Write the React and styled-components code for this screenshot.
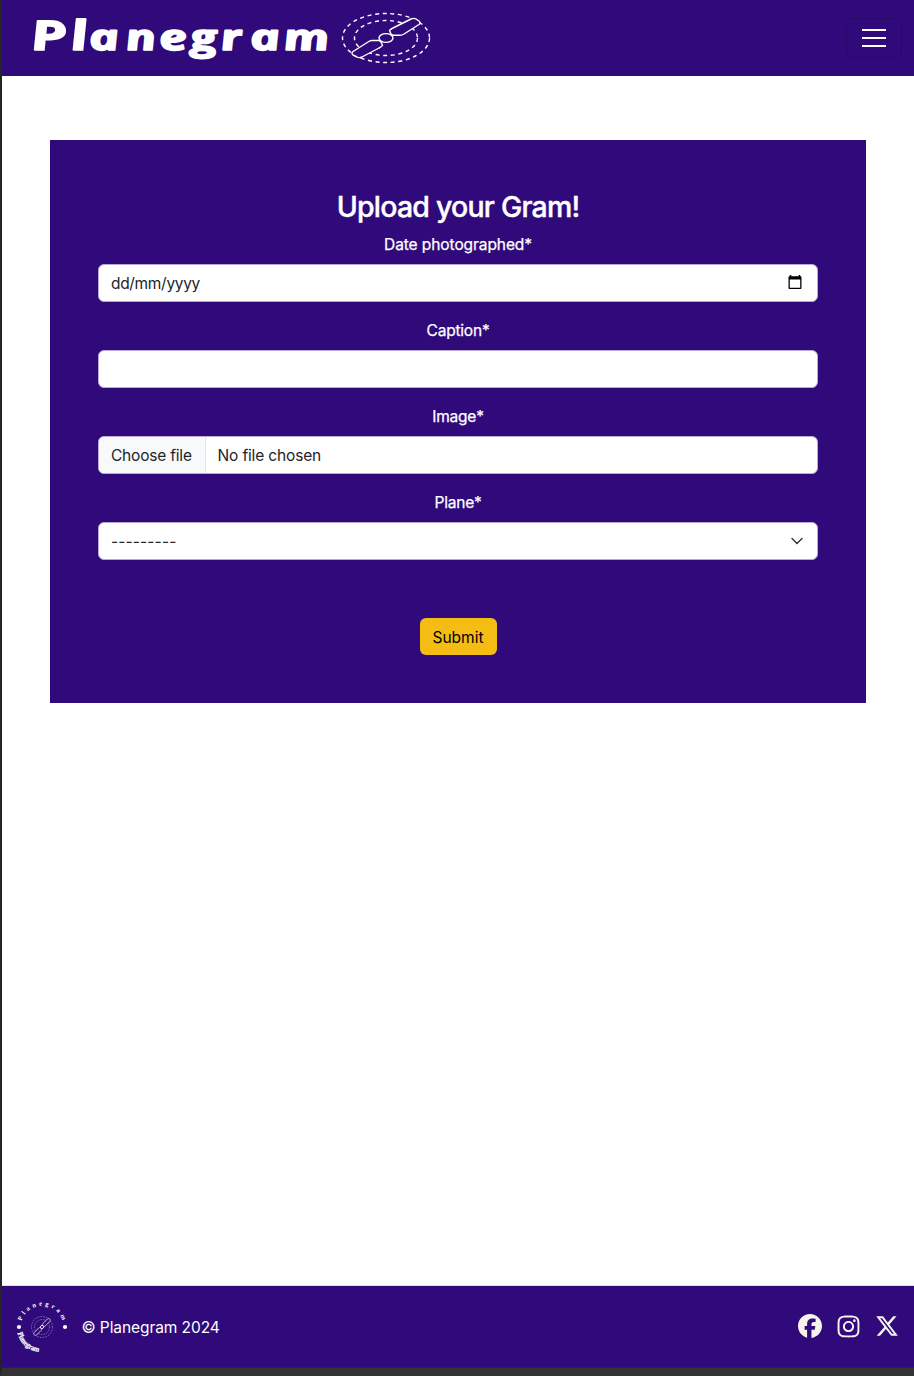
import React from 'react';
import styled, { createGlobalStyle } from 'styled-components';
import { FaFacebook, FaInstagram, FaXTwitter } from 'react-icons/fa6';

const purple = '#300a7b';

const GlobalStyle = createGlobalStyle`
  *, *::before, *::after { box-sizing: border-box; }
  body {
    margin: 0;
    background: #fff;
    color: #212529;
    font: 400 16px/24px Inter, "Liberation Sans", sans-serif;
  }
`;

const Page = styled.div`
  display: flex;
  flex-direction: column;
  height: 1376px;
  border-left: 2px solid #242426;
  border-bottom: 8px solid #333;
`;

const Header = styled.header`
  display: flex;
  align-items: center;
  justify-content: space-between;
  height: 76px;
  padding: 0 12px 0 24px;
  background: ${purple};
`;

const Brand = styled.a`
  display: block;
  height: 76px;
`;

const Wordmark = styled.text`
  fill: #fff;
  stroke: #fff;
  stroke-width: 1.6px;
  stroke-linejoin: round;
  font: italic 700 36px "Open Sans", sans-serif;
`;

const Tall = styled.tspan`
  font-size: 41px;
`;

const Toggler = styled.button`
  display: flex;
  align-items: center;
  justify-content: center;
  width: 56px;
  height: 40px;
  padding: 0;
  background: transparent;
  border: 1px solid #2a086b;
  border-radius: 6px;
`;

const Main = styled.main`
  flex: 1;
  padding: 64px 48px 0;
`;

const Card = styled.form`
  display: flex;
  flex-direction: column;
  height: 563.4px;
  padding: 48px;
  background: ${purple};
`;

const Title = styled.h2`
  margin: 0 0 7px;
  padding-top: 1px;
  color: #fff;
  font-size: 28.5px;
  font-weight: 500;
  line-height: 36px;
  letter-spacing: -0.78px;
  text-align: center;
  -webkit-text-stroke: 0.4px #fff;
`;

const Field = styled.div`
  margin-bottom: 16px;
`;

const Label = styled.label`
  display: block;
  margin-bottom: 7px;
  padding-top: 1px;
  color: #fff;
  text-align: center;
  font-size: 15.5px;
  letter-spacing: ${(p) => p.$spacing || '-0.2px'};
  -webkit-text-stroke: 0.25px #fff;
`;

const Control = styled.div`
  display: flex;
  align-items: center;
  justify-content: space-between;
  height: 38px;
  padding: ${(p) => (p.$file ? '0' : '0 12px')};
  overflow: hidden;
  background: #fff;
  border: 1px solid #b8a8d2;
  border-radius: 6px;
`;

const Value = styled.span`
  padding-top: 2px;
  font-size: 15.5px;
  letter-spacing: ${(p) => p.$spacing || '-0.2px'};
`;

const FileButton = styled.span`
  display: flex;
  align-items: center;
  width: 107px;
  height: 36px;
  padding: 2px 0 0 12px;
  background: #f8f9fa;
  border-right: 1px solid #dee2e6;
  font-size: 15.5px;
  letter-spacing: -0.2px;
`;

const FileName = styled(Value)`
  flex: 1;
  padding-left: 11.5px;
`;

const Submit = styled.button`
  align-self: center;
  width: 77px;
  height: 38px;
  margin-top: 42px;
  padding: 2px 0 0;
  color: #000;
  background: #f5bd13;
  border: 0;
  border-radius: 6px;
  font: 15.5px/24px Inter, sans-serif;
`;

const Footer = styled.footer`
  display: flex;
  align-items: center;
  height: 83px;
  padding: 0 15px 0 13px;
  background: ${purple};
  border-top: 1px solid #e1dcec;
  border-bottom: 1px solid #26243a;
`;

const Copyright = styled.span`
  flex: 1;
  margin-left: 12.5px;
  padding-top: 2px;
  color: #fff;
  font-size: 15.5px;
  letter-spacing: -0.08px;
`;

const Socials = styled.nav`
  display: flex;
  align-items: center;
  gap: 14px;
  padding-bottom: 1px;
  color: #f6f3ea;
  svg { display: block; }
`;

const BadgeText = styled.text`
  fill: #fff;
  font: 700 ${(p) => p.$size}px "Liberation Serif", serif;
`;

function BrandLogo() {
  return (
    <svg width="410" height="76" viewBox="26 0 410 76" aria-label="Planegram">
      <Wordmark transform="translate(0 49.5) skewX(11) scale(1.4 1)" x="24 52 65 91 115 137 159 180 204">
        <Tall>Pl</Tall>anegram
      </Wordmark>
      <g fill="none" stroke="#fff">
        <ellipse cx="386" cy="38" rx="43.5" ry="24.5" strokeWidth="1.4" strokeDasharray="4 3.6" />
        <ellipse cx="386" cy="38" rx="31.5" ry="17.5" strokeWidth="1.4" strokeDasharray="4 3.6" />
        <g fill={purple} strokeWidth="1.4" strokeLinejoin="round">
          <path d="M391 34 L389.5 30.5 Q390 29.5 393 28 L411 19 Q414 17.7 416 19 L419 21 Q421 23 419 24.5 L404 34 Q402 35.3 400 35.3 L393 35.3 Z" />
          <path d="M381 42 L382.5 45.5 Q382 46.5 379 48 L362 57 Q359 58.3 357 57 L353 55 Q351 53 353 51.5 L368 42 Q370 40.5 372 40.5 L379 40.5 Z" />
          <ellipse cx="386" cy="38" rx="7" ry="4.4" />
        </g>
      </g>
    </svg>
  );
}

function FooterLogo() {
  return (
    <svg width="54" height="56" viewBox="-27 -28 54 56" aria-label="Planegram">
      <defs>
        <path id="badge-top" d="M-20.5 -6 A21.4 21.4 0 0 1 20.8 -5" />
        <path id="badge-bottom" d="M-24.5 6 A25 25 0 0 0 -1 25" />
      </defs>
      <BadgeText $size={6.5}><textPath href="#badge-top" textLength="54">Planegram</textPath></BadgeText>
      <BadgeText $size={7.6} stroke="#fff" strokeWidth=".25"><textPath href="#badge-bottom" textLength="30" lengthAdjust="spacingAndGlyphs">Planegram</textPath></BadgeText>
      <circle cx="-23" r="2.1" fill="#fff" />
      <circle cx="23" r="2.1" fill="#fff" />
      <g fill="none" stroke="#b5a5d5" strokeWidth=".6">
        <circle r="10.5" strokeDasharray="1.6 1.2" />
        <circle r="7.5" strokeDasharray="1.6 1.2" />
        <g transform="rotate(-46)" fill={purple} stroke="#d9d0eb" strokeWidth=".8">
          <rect x="1.5" y="-1.7" width="9.5" height="3.4" rx="1.5" />
          <rect x="-11" y="-1.7" width="9.5" height="3.4" rx="1.5" />
          <circle r="1.6" stroke="#fff" />
        </g>
      </g>
    </svg>
  );
}

const CalendarSvg = styled.svg`
  margin: 0 3px 1px 0;
`;

function CalendarIcon() {
  return (
    <CalendarSvg width="14" height="15" viewBox="0 0 14 15">
      <path fill="#000" fillRule="evenodd" d="M1.8 0H3.3V1.2H10.7V0H12.2V1.2H12.5Q13.5 1.2 13.5 2.2V13Q13.5 14 12.5 14H1.5Q.5 14 .5 13V2.2Q.5 1.2 1.5 1.2H1.8ZM1.8 4.5V12.7H12.2V4.5Z" />
    </CalendarSvg>
  );
}

export default function App() {
  return (
    <>
      <GlobalStyle />
      <Page>
        <Header>
          <Brand><BrandLogo /></Brand>
          <Toggler type="button" aria-label="Toggle navigation">
            <svg width="24" height="20" viewBox="0 0 24 20"><path d="M0 2H24M0 10H24M0 18H24" stroke="#fff" strokeWidth="2" /></svg>
          </Toggler>
        </Header>
        <Main>
          <Card>
            <Title>Upload your Gram!</Title>
            <Field>
              <Label $spacing="-0.08px">Date photographed*</Label>
              <Control><Value $spacing="-0.32px">dd/mm/yyyy</Value><CalendarIcon /></Control>
            </Field>
            <Field>
              <Label>Caption*</Label>
              <Control />
            </Field>
            <Field>
              <Label>Image*</Label>
              <Control $file><FileButton>Choose file</FileButton><FileName $spacing="-0.15px">No file chosen</FileName></Control>
            </Field>
            <Field>
              <Label>Plane*</Label>
              <Control>
                <Value $spacing="0.14px">---------</Value>
                <svg width="16" height="12" viewBox="0 0 16 12"><path d="M3 3.5L8 8.5L13 3.5" fill="none" stroke="#343a40" strokeWidth="1.5" strokeLinecap="round" strokeLinejoin="round" /></svg>
              </Control>
            </Field>
            <Submit type="button">Submit</Submit>
          </Card>
        </Main>
        <Footer>
          <FooterLogo />
          <Copyright>© Planegram 2024</Copyright>
          <Socials>
            <FaFacebook size={24} />
            <FaInstagram size={25} />
            <FaXTwitter size={24} />
          </Socials>
        </Footer>
      </Page>
    </>
  );
}
